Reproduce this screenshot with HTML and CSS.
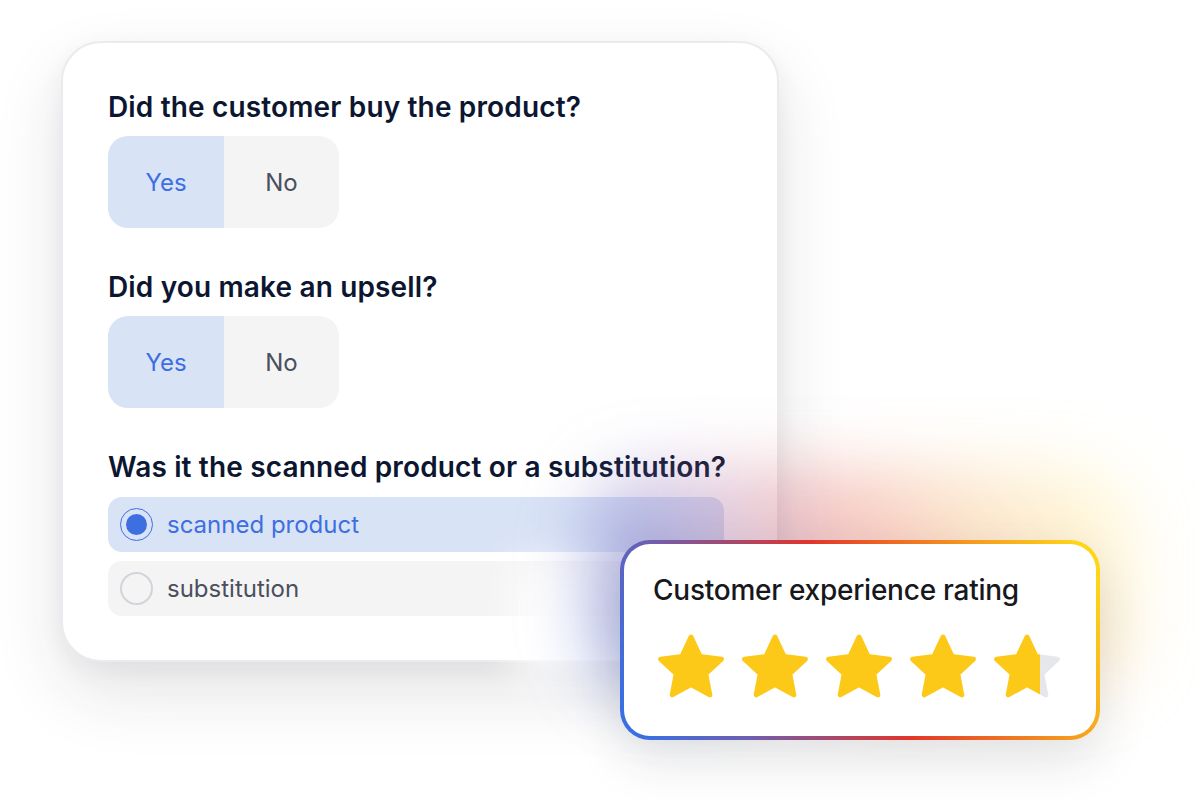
FILE: index.html
```html
<!DOCTYPE html>
<html lang="en">
<head>
    <meta charset="UTF-8">
    <title>Sale feedback</title>
    <link rel="stylesheet" href="styles.css">
</head>
<body>
    <div class="stage">
        <div class="form-card">
            <div class="question">Did the customer buy the product?</div>
            <div class="toggle">
                <div class="toggle-option active">Yes</div>
                <div class="toggle-option">No</div>
            </div>

            <div class="question">Did you make an upsell?</div>
            <div class="toggle">
                <div class="toggle-option active">Yes</div>
                <div class="toggle-option">No</div>
            </div>

            <div class="question">Was it the scanned product or a substitution?</div>
            <div class="choices">
                <div class="choice selected">
                    <span class="radio"></span>
                    <span class="choice-label">scanned product</span>
                </div>
                <div class="choice">
                    <span class="radio"></span>
                    <span class="choice-label">substitution</span>
                </div>
            </div>
        </div>

        <!-- soft glow behind the rating card -->
        <div class="glow-white"></div>
        <div class="glow"></div>

        <div class="rating-card">
            <div class="rating-title">Customer experience rating</div>
            <div class="stars">
                <svg class="star" viewBox="0 0 68 66"><polygon points="34,4 43.11,23.46 64.43,26.11 48.74,40.79 52.81,61.89 34,51.5 15.19,61.89 19.26,40.79 3.57,26.11 24.89,23.46"/></svg>
                <svg class="star" viewBox="0 0 68 66"><polygon points="34,4 43.11,23.46 64.43,26.11 48.74,40.79 52.81,61.89 34,51.5 15.19,61.89 19.26,40.79 3.57,26.11 24.89,23.46"/></svg>
                <svg class="star" viewBox="0 0 68 66"><polygon points="34,4 43.11,23.46 64.43,26.11 48.74,40.79 52.81,61.89 34,51.5 15.19,61.89 19.26,40.79 3.57,26.11 24.89,23.46"/></svg>
                <svg class="star" viewBox="0 0 68 66"><polygon points="34,4 43.11,23.46 64.43,26.11 48.74,40.79 52.81,61.89 34,51.5 15.19,61.89 19.26,40.79 3.57,26.11 24.89,23.46"/></svg>
                <svg class="star star-partial" viewBox="0 0 68 66">
                    <defs>
                        <linearGradient id="half-fill" gradientUnits="userSpaceOnUse" x1="0" y1="0" x2="68" y2="0">
                            <stop offset="0.69" stop-color="#fcc918"/>
                            <stop offset="0.69" stop-color="#e6e7ea"/>
                        </linearGradient>
                    </defs>
                    <polygon points="34,4 43.11,23.46 64.43,26.11 48.74,40.79 52.81,61.89 34,51.5 15.19,61.89 19.26,40.79 3.57,26.11 24.89,23.46"/>
                </svg>
            </div>
        </div>
    </div>
</body>
</html>
```

FILE: styles.css
```css
body, html {
    margin: 0;
    padding: 0;
    background: #fff;
    font-family: 'Inter', 'Liberation Sans', sans-serif;
}
.stage {
    position: relative;
    width: 1200px;
    height: 800px;
    overflow: hidden;
    padding: 41px 0 0 61px;
    box-sizing: border-box;
}
.form-card {
    width: 718px;
    height: 621px;
    box-sizing: border-box;
    border: 2px solid #ebebed;
    border-radius: 40px;
    background: #fff;
    padding: 48px 53px 45px 45px;
    box-shadow: 0 30px 70px rgba(30, 35, 50, 0.12), 0 8px 24px rgba(30, 35, 50, 0.05);
}
.question {
    font-size: 28px;
    line-height: 32px;
    font-weight: 600;
    color: #0c1631;
    letter-spacing: 0.15px;
    white-space: nowrap;
    margin-top: 43px;
}
.question:first-child {
    margin-top: 0;
}
.toggle {
    display: flex;
    width: 231px;
    height: 92px;
    margin-top: 13px;
    border-radius: 20px;
    overflow: hidden;
}
.toggle-option {
    flex: 1;
    display: flex;
    align-items: center;
    justify-content: center;
    font-size: 24px;
    color: #4a4f5c;
    background: #f4f4f5;
}
.toggle-option.active {
    flex: 0 0 116px;
    color: #3d6fe0;
    background: #d9e3f6;
}
.choices {
    display: flex;
    flex-direction: column;
    gap: 9px;
    margin-top: 14px;
}
.choice {
    display: flex;
    align-items: center;
    gap: 14px;
    height: 55px;
    padding: 0 12px;
    border-radius: 14px;
    background: #f4f4f5;
    font-size: 24px;
    color: #4a4f5c;
}
.choice.selected {
    background: #d9e3f6;
    color: #3d6fe0;
}
.radio {
    width: 33px;
    height: 33px;
    box-sizing: border-box;
    border-radius: 50%;
    border: 2px solid #d2d4da;
    display: flex;
    align-items: center;
    justify-content: center;
}
.choice.selected .radio {
    border: 1.5px solid #3d6fe0;
}
.choice.selected .radio::after {
    content: '';
    width: 21px;
    height: 21px;
    border-radius: 50%;
    background: #3d6fe0;
}
.glow-white {
    position: absolute;
    left: 515px;
    top: 560px;
    width: 120px;
    height: 120px;
    background: rgba(255, 255, 255, 0.9);
    filter: blur(20px);
}
.glow {
    position: absolute;
    left: 590px;
    top: 470px;
    width: 545px;
    height: 220px;
    border-radius: 60px;
    background: linear-gradient(63deg, rgba(90, 110, 205, 0.5) 8%, rgba(150, 110, 180, 0.35) 28%, rgba(225, 70, 60, 0.32) 50%, rgba(240, 150, 50, 0.26) 70%, rgba(255, 215, 60, 0.2) 90%);
    filter: blur(34px);
}
.rating-card {
    position: absolute;
    left: 620px;
    top: 540px;
    width: 480px;
    height: 200px;
    box-sizing: border-box;
    border: 4px solid transparent;
    border-radius: 30px;
    background:
        linear-gradient(#fff, #fff) padding-box,
        linear-gradient(63deg, #3a6fe2 4%, #6c5fb2 22%, #a5496e 36%, #e1352b 50%, #ed6a24 64%, #f6a21e 80%, #fdd51a 96%) border-box;
    box-shadow: 0 20px 50px rgba(30, 35, 50, 0.13);
    padding: 30px 0 0 29px;
}
.rating-title {
    font-size: 28px;
    line-height: 32px;
    font-weight: 500;
    color: #17181c;
    letter-spacing: -0.25px;
}
.stars {
    display: flex;
    gap: 16px;
    margin: 27px 0 0 4px;
}
.star {
    width: 68px;
    height: 66px;
    display: block;
}
.star polygon {
    fill: #fcc918;
    stroke: #fcc918;
    stroke-width: 5;
    stroke-linejoin: round;
}
.star-partial polygon {
    fill: url(#half-fill);
    stroke: url(#half-fill);
}
```
